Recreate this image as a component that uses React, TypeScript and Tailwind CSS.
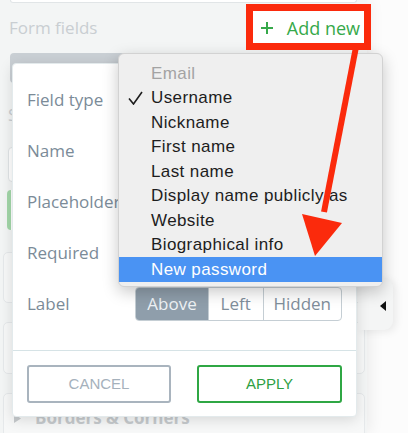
export default function App() {
  const items = [
    "Username",
    "Nickname",
    "First name",
    "Last name",
    "Display name publicly as",
    "Website",
    "Biographical info",
  ];
  const labels = ["Field type", "Name", "Placeholder", "Required", "Label"];
  return (
    <div className="relative h-[433px] w-[408px] overflow-hidden bg-[#fcfcfc] font-['Open_Sans',sans-serif]">
      {/* background panel */}
      <div className="flex h-full w-[367px] flex-col overflow-hidden bg-[#f3f5f5] shadow-[3px_0_14px_rgba(0,0,0,0.07)]">
        <div className="mx-[10px] h-[3px] shrink-0 rounded-b-[4px] border-x border-b border-[#e1e5e7] bg-white" />
        <div className="flex h-[46px] shrink-0 items-center justify-between pl-[9px] pr-[2px] pt-[4px]">
          <span className="text-[17px] text-[#c9ced2]">Form fields</span>
          <div className="flex h-[36px] items-center gap-[14px] bg-white pl-[11px] pr-[5px] text-[#36a94a]">
            <svg width="12" height="12" viewBox="0 0 12 12">
              <path d="M6 0V12M0 6H12" stroke="#36a94a" strokeWidth="2" />
            </svg>
            <span className="text-[18px]">Add new</span>
          </div>
        </div>
        <div className="mx-[10px] mt-[4px] flex h-[30px] shrink-0 overflow-hidden rounded-[4px]">
          <div className="w-[170px] bg-[#c9cfd4]" />
          <div className="flex-1 bg-white" />
        </div>
        <div className="ml-[8px] mt-[20px] h-[24px] w-[4px] shrink-0 overflow-hidden whitespace-nowrap text-[17px] leading-[24px] text-[#c9ced2]">S</div>
        <div className="mr-[4px] ml-[8px] mt-[20px] h-[35px] shrink-0 rounded-[4px] border border-[#e0e4e6] bg-white" />
        <div className="mr-[4px] ml-[7px] mt-[8px] h-[40px] shrink-0 rounded-[4px] border-l-[4px] border-[#a3d7a9] bg-white" />
        <div className="mr-[2px] ml-[3px] mt-[22px] h-[51px] shrink-0 rounded-[5px] border border-[#e6e9eb] bg-[#f7f8f8]" />
        <div className="mr-[2px] ml-[3px] mt-[19px] h-[52px] shrink-0 rounded-[5px] border border-[#e6e9eb] bg-[#f7f8f8]" />
        <div className="mr-[2px] ml-[3px] mt-[19px] flex h-[60px] shrink-0 items-start gap-[14px] rounded-[5px] border border-[#e6e9eb] bg-[#f7f8f8] pl-[10px] pt-[11px]">
          <svg width="7" height="9" viewBox="0 0 7 9" className="mt-[9px]">
            <path d="M0 0L7 4.5L0 9Z" fill="#c6cacd" />
          </svg>
          <span className="whitespace-nowrap text-[17px] font-bold leading-[26px] text-[#c6cacd]">Borders &amp; Corners</span>
        </div>
      </div>

      {/* collapse handle */}
      <div className="absolute left-[358px] top-[278px] flex h-[52px] w-[35px] items-center justify-end rounded-r-[9px] bg-[#f4f5f5] pr-[7px] pt-[3px] shadow-[3px_2px_8px_rgba(0,0,0,0.08)]">
        <svg width="6" height="10" viewBox="0 0 6 10">
          <path d="M6 0L0 5L6 10Z" fill="#111" />
        </svg>
      </div>

      {/* modal */}
      <div className="absolute left-[12px] top-[63px] flex w-[345px] flex-col rounded-[4px] border border-[#e3eaec] bg-white pt-[10px] shadow-[0_3px_14px_rgba(0,0,0,0.13)]">
        {labels.map((l, i) => (
          <div key={l} className="flex h-[51px] items-center pl-[14px] pr-[14px]">
            <span className="w-[109px] whitespace-nowrap text-[17px] text-[#7b8b98]">{l}</span>
            {i === 4 && (
              <div className="flex h-[34px] overflow-hidden rounded-[4px] border border-[#c5ced4] text-[17px]">
                <div className="flex w-[72px] items-center justify-center bg-[#8f9eab] text-[#eef2f5]">Above</div>
                <div className="flex w-[55px] items-center justify-center border-l border-[#c5ced4] text-[#7f8e9b]">Left</div>
                <div className="flex w-[79px] items-center justify-center border-l border-[#c5ced4] text-[#7f8e9b]">Hidden</div>
              </div>
            )}
          </div>
        ))}
        <div className="mt-[21px] border-t border-[#d6e3e6]" />
        <div className="flex gap-[26px] px-[14px] pb-[13px] pt-[14px] font-['Liberation_Sans',sans-serif] text-[15px]">
          <div className="flex h-[38px] w-[144px] items-center justify-center rounded-[3px] border-2 border-[#a9b4be] text-[#a5b1bc]">CANCEL</div>
          <div className="flex h-[38px] w-[145px] items-center justify-center rounded-[3px] border-2 border-[#2fa744] text-[#2ea043]">APPLY</div>
        </div>
      </div>

      {/* dropdown */}
      <div className="absolute left-[118px] top-[53px] h-[234px] w-[265px] rounded-[6px] border border-[#d2d2d2] bg-[#efefef] pt-[7px] font-['Liberation_Sans',sans-serif] text-[17px] tracking-[0.4px] shadow-[0_5px_16px_rgba(0,0,0,0.22)]">
        <div className="flex h-[24.5px] items-center pl-[32px] text-[#a3a3a3]">Email</div>
        {items.map((t, i) => (
          <div key={t} className="relative flex h-[24.5px] items-center pl-[32px] text-[#1d1d1d]">
            {i === 0 && (
              <svg className="absolute left-[9px] top-[5px]" width="15" height="14" viewBox="0 0 15 14">
                <path d="M1 7.5L5.5 13L14 1" stroke="#1d1d1d" strokeWidth="1.6" fill="none" />
              </svg>
            )}
            {t}
          </div>
        ))}
        <div className="flex h-[24.5px] items-center bg-[#4a93f3] pl-[32px] text-white">New password</div>
      </div>

      {/* red highlight box */}
      <div className="absolute left-[246px] top-[4px] h-[46px] w-[125px] border-[7px] border-[#fb2a0c]" />

      {/* red arrow */}
      <svg className="pointer-events-none absolute left-0 top-0" width="408" height="433" viewBox="0 0 408 433">
        <path d="M356 47L324 212" stroke="#fb2a0c" strokeWidth="6" />
        <path d="M302 214L342 223L315 256Z" fill="#fb2a0c" />
      </svg>
    </div>
  );
}
